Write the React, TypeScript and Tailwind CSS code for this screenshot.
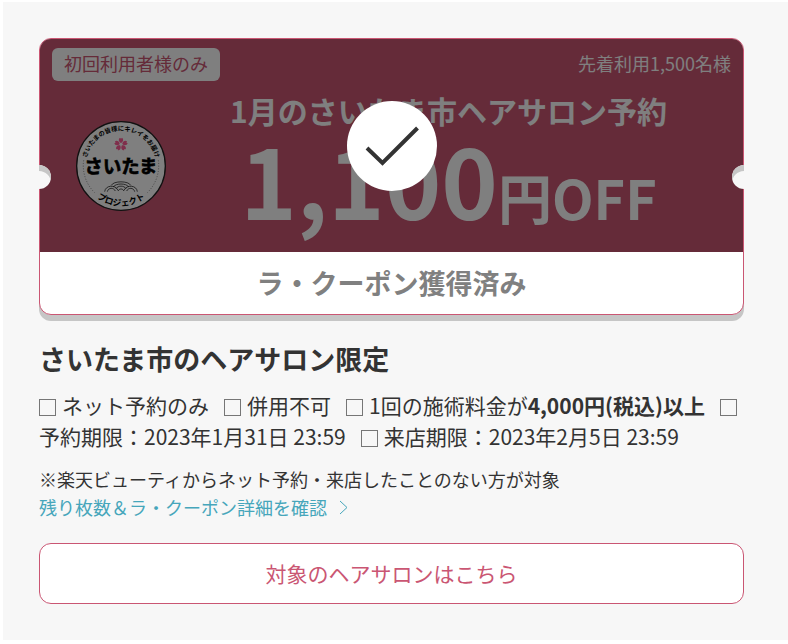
const BOX =
  "appearance-none size-[17px] border border-[#767676] mr-[6px] align-[-2px]";

const conditions = [
  { id: "net", text: "ネット予約のみ" },
  { id: "combine", text: "併用不可" },
  { id: "price", text: "1回の施術料金が", strong: "4,000円(税込)以上" },
  { id: "reserve", text: "予約期限：2023年1月31日 23:59" },
  { id: "visit", text: "来店期限：2023年2月5日 23:59" },
];

function ProjectLogo() {
  return (
    <svg
      viewBox="0 0 270 270"
      className="size-[90px] shrink-0"
      role="img"
      aria-label="さいたまプロジェクト"
    >
      <defs>
        <path id="arc-top" d="M 29 135 A 106 106 0 0 1 241 135" />
        <path id="arc-bottom" d="M 15 135 A 120 120 0 0 0 255 135" />
      </defs>
      <circle cx="135" cy="135" r="133" fill="#fff" stroke="#222" strokeWidth="4" />
      <g fill="#000" fontWeight="700" textAnchor="middle">
        <text fontSize="19">
          <textPath href="#arc-top" startOffset="50%">
            さいたまの皆様にキレイをお届け
          </textPath>
        </text>
        <text x="135" y="157" fontSize="55" stroke="#000" strokeWidth="2">
          さいたま
        </text>
        <text fontSize="26">
          <textPath href="#arc-bottom" startOffset="50%">
            プロジェクト
          </textPath>
        </text>
      </g>
      {/* sakura */}
      <g fill="#ff5c96" transform="translate(135 70)">
        {[0, 72, 144, 216, 288].map((deg) => (
          <path
            key={deg}
            transform={`rotate(${deg})`}
            d="M0 -4 C-8 -8 -8 -17 -3 -20 L0 -17 L3 -20 C8 -17 8 -8 0 -4Z"
          />
        ))}
      </g>
      {/* clouds */}
      <g fill="none" stroke="#000" strokeWidth="2">
        <path d="M106 193 C112 179 158 179 164 193" />
        <path d="M112 198 C118 186 152 186 158 198" />
        <path d="M120 203 C126 193 144 193 150 203" />
        <path d="M86 212 C88 192 118 190 126 208" />
        <path d="M94 212 C97 199 113 199 118 210" />
        <path d="M144 208 C152 190 182 192 184 212" />
        <path d="M152 210 C157 199 173 199 176 212" />
        <path d="M126 210 C130 202 140 202 144 210" />
      </g>
      <g fill="none" stroke="#555" strokeWidth="2" strokeDasharray="3 5">
        <path d="M23 118 A113 113 0 0 0 56 215" />
        <path d="M247 118 A113 113 0 0 1 214 215" />
      </g>
    </svg>
  );
}

function Coupon() {
  return (
    <section className="relative rounded-xl border border-[#ca5673] bg-white shadow-[0_6px_0_#c6c6c6]">
      <div className="relative overflow-hidden rounded-t-[11px] bg-[#ca5673] pt-[9px] pb-[11px] text-white">
        <div className="flex items-start justify-between px-3 text-lg leading-[31px]">
          <span className="rounded-md bg-white px-3 pb-[2px] text-[#ca5673]">初回利用者様のみ</span>
          <span>先着利用1,500名様</span>
        </div>
        <div className="mt-[10px] flex items-center pr-3 pl-9">
          <ProjectLogo />
          <div className="flex-1 pb-[14px] text-center font-bold whitespace-nowrap">
            <p className="text-[30px] leading-[38px]">1月のさいたま市ヘアサロン予約</p>
            <p className="mt-[2px] text-[96px] leading-[96px]">
              1,100<span className="text-[54px] leading-none">円OFF</span>
            </p>
          </div>
        </div>
        <div className="absolute inset-0 bg-black/50" />
        <div className="absolute inset-0 flex items-center justify-center">
          <svg viewBox="0 0 90 90" className="size-[90px] rounded-full bg-white" aria-hidden="true">
            <path d="M20 47 L35.5 62 L70.5 27" fill="none" stroke="#333" strokeWidth="4" />
          </svg>
        </div>
      </div>
      <button
        type="button"
        disabled
        className="block w-full rounded-b-xl text-[27px] leading-[62px] font-bold text-[#808080]"
      >
        ラ・クーポン獲得済み
      </button>
      <i className="absolute top-[126px] -left-px h-6 w-3 rounded-r-full bg-[#f7f7f7] shadow-[inset_0_6px_0_#c6c6c6]" />
      <i className="absolute top-[126px] -right-px h-6 w-3 rounded-l-full bg-[#f7f7f7] shadow-[inset_0_6px_0_#c6c6c6]" />
    </section>
  );
}

export default function App() {
  return (
    <div className="bg-white pt-[2px] pb-1 pl-[3px] font-['Noto_Sans_CJK_JP',sans-serif] text-[#333]" lang="ja">
      <main className="bg-[#f7f7f7] pt-9 pr-11 pb-9 pl-9">
        <Coupon />

        <h1 className="mt-6 text-[27px] leading-10 font-bold">さいたま市のヘアサロン限定</h1>

        <div className="mt-[11px] text-[21px] leading-[31px]">
          {conditions.map((c) => (
            <label key={c.id} htmlFor={c.id} className="mr-[15px]">
              <input id={c.id} type="checkbox" className={BOX} />
              {c.text}
              {c.strong && <b>{c.strong}</b>}
            </label>
          ))}
        </div>

        <div className="mt-[13px] text-lg leading-7">
          <p>※楽天ビューティからネット予約・来店したことのない方が対象</p>
          <a href="#detail" className="flex items-center text-[#46a6bb]">
            残り枚数＆ラ・クーポン詳細を確認
            <svg viewBox="0 0 9 15" className="ml-3 h-[15px] w-[9px]" aria-hidden="true">
              <path d="M1 1 L8 7.5 L1 14" fill="none" stroke="currentColor" />
            </svg>
          </a>
        </div>

        <a
          href="#salons"
          className="mt-[22px] block rounded-xl border border-[#ca5673] bg-white text-center text-[21px] leading-[59px] text-[#ca5673]"
        >
          対象のヘアサロンはこちら
        </a>
      </main>
    </div>
  );
}
